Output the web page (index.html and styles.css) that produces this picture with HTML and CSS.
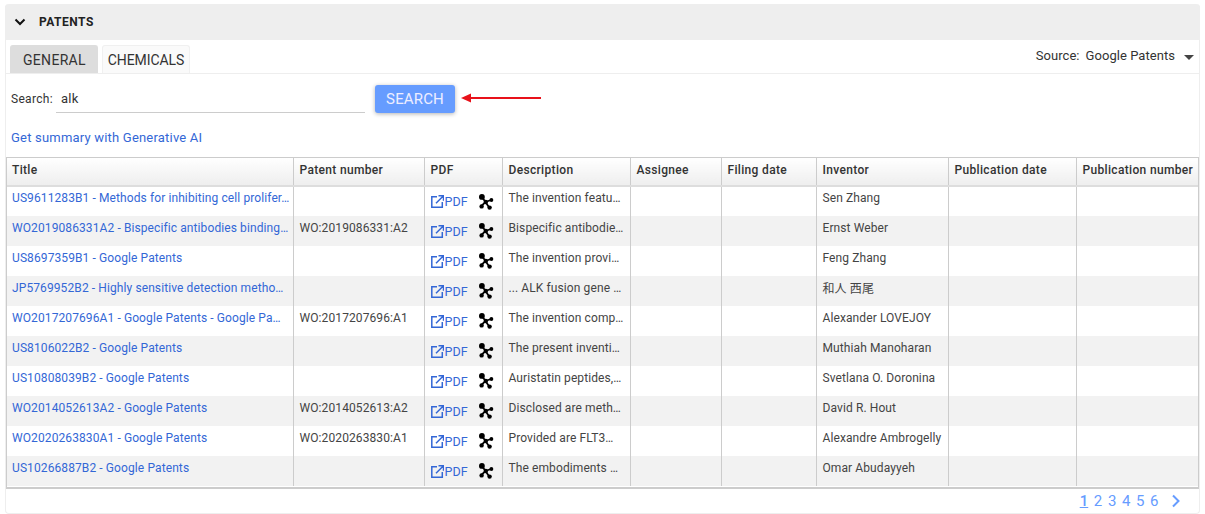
FILE: index.html
```html
<!DOCTYPE html>
<html lang="en">
<head>
  <meta charset="UTF-8" />
  <title>Patents</title>
  <link rel="stylesheet" href="styles.css">
</head>
<body>
  <svg class="defs" width="0" height="0">
    <symbol id="open" viewBox="0 0 13 13">
      <path d="M6 1.7H0.8v10.5h10.5V7M7.5 0.8h5v5M12.5 0.8L5 8.2" fill="none" stroke="currentColor" stroke-width="1.5"/>
    </symbol>
    <symbol id="mol" viewBox="0 0 15 16">
      <path d="M2.5 2.5L6.5 8L2.5 12M6.5 8L12 6M6.5 8L10.5 14" fill="none" stroke="#000" stroke-width="1.8"/>
      <circle cx="2.9" cy="2.9" r="2.9"/>
      <circle cx="2.6" cy="12.4" r="2.2"/>
      <circle cx="12.4" cy="6" r="1.9"/>
      <circle cx="10.6" cy="13.6" r="2.2"/>
      <circle cx="6.8" cy="8" r="2.2"/>
    </symbol>
  </svg>

  <div class="panel">
    <div class="panel-head">
      <svg class="chevron" width="12" height="8" viewBox="0 0 12 8"><path d="M1.5 1.5L6 6L10.5 1.5" fill="none" stroke="#111" stroke-width="2"/></svg>
      <span class="panel-title">PATENTS</span>
    </div>

    <div class="tabs">
      <div class="tab tab-active">GENERAL</div>
      <div class="tab">CHEMICALS</div>
      <div class="source">
        <span>Source:</span>
        <span>Google Patents</span>
        <span class="caret"></span>
      </div>
    </div>

    <div class="search-row">
      <label class="search-label" for="q">Search:</label>
      <input class="search-input" id="q" type="text" value="alk">
      <button class="search-btn">SEARCH</button>
      <svg class="arrow" width="80" height="12" viewBox="0 0 80 12"><path d="M8 6H80" stroke="#e8111a" stroke-width="2"/><path d="M0 6L10 1.5V10.5Z" fill="#e8111a"/></svg>
    </div>

    <a class="ai-link" href="#">Get summary with Generative AI</a>

    <div class="table-wrap">
      <table class="grid">
        <colgroup>
          <col class="c-title"><col class="c-num"><col class="c-pdf"><col class="c-desc"><col class="c-asg"><col class="c-file"><col class="c-inv"><col class="c-pub"><col class="c-pubn">
        </colgroup>
        <thead>
          <tr>
            <th>Title</th><th>Patent number</th><th>PDF</th><th>Description</th><th>Assignee</th><th>Filing date</th><th>Inventor</th><th>Publication date</th><th>Publication number</th>
          </tr>
        </thead>
        <tbody id="rows">
          <tr><td><a href="#">US9611283B1 - Methods for inhibiting cell prolifer…</a></td><td></td><td class="pdf"><a href="#"><svg class="i-open"><use href="#open"/></svg>PDF</a><svg class="i-mol"><use href="#mol"/></svg></td><td>The invention featu…</td><td></td><td></td><td>Sen Zhang</td><td></td><td></td></tr>
          <tr><td><a href="#">WO2019086331A2 - Bispecific antibodies binding…</a></td><td>WO:2019086331:A2</td><td class="pdf"><a href="#"><svg class="i-open"><use href="#open"/></svg>PDF</a><svg class="i-mol"><use href="#mol"/></svg></td><td>Bispecific antibodie…</td><td></td><td></td><td>Ernst Weber</td><td></td><td></td></tr>
          <tr><td><a href="#">US8697359B1 - Google Patents</a></td><td></td><td class="pdf"><a href="#"><svg class="i-open"><use href="#open"/></svg>PDF</a><svg class="i-mol"><use href="#mol"/></svg></td><td>The invention provi…</td><td></td><td></td><td>Feng Zhang</td><td></td><td></td></tr>
          <tr><td><a href="#">JP5769952B2 - Highly sensitive detection metho…</a></td><td></td><td class="pdf"><a href="#"><svg class="i-open"><use href="#open"/></svg>PDF</a><svg class="i-mol"><use href="#mol"/></svg></td><td>... ALK fusion gene …</td><td></td><td></td><td>和人 西尾</td><td></td><td></td></tr>
          <tr><td><a href="#">WO2017207696A1 - Google Patents - Google Pa…</a></td><td>WO:2017207696:A1</td><td class="pdf"><a href="#"><svg class="i-open"><use href="#open"/></svg>PDF</a><svg class="i-mol"><use href="#mol"/></svg></td><td>The invention comp…</td><td></td><td></td><td>Alexander LOVEJOY</td><td></td><td></td></tr>
          <tr><td><a href="#">US8106022B2 - Google Patents</a></td><td></td><td class="pdf"><a href="#"><svg class="i-open"><use href="#open"/></svg>PDF</a><svg class="i-mol"><use href="#mol"/></svg></td><td>The present inventi…</td><td></td><td></td><td>Muthiah Manoharan</td><td></td><td></td></tr>
          <tr><td><a href="#">US10808039B2 - Google Patents</a></td><td></td><td class="pdf"><a href="#"><svg class="i-open"><use href="#open"/></svg>PDF</a><svg class="i-mol"><use href="#mol"/></svg></td><td>Auristatin peptides,…</td><td></td><td></td><td>Svetlana O. Doronina</td><td></td><td></td></tr>
          <tr><td><a href="#">WO2014052613A2 - Google Patents</a></td><td>WO:2014052613:A2</td><td class="pdf"><a href="#"><svg class="i-open"><use href="#open"/></svg>PDF</a><svg class="i-mol"><use href="#mol"/></svg></td><td>Disclosed are meth…</td><td></td><td></td><td>David R. Hout</td><td></td><td></td></tr>
          <tr><td><a href="#">WO2020263830A1 - Google Patents</a></td><td>WO:2020263830:A1</td><td class="pdf"><a href="#"><svg class="i-open"><use href="#open"/></svg>PDF</a><svg class="i-mol"><use href="#mol"/></svg></td><td>Provided are FLT3…</td><td></td><td></td><td>Alexandre Ambrogelly</td><td></td><td></td></tr>
          <tr><td><a href="#">US10266887B2 - Google Patents</a></td><td></td><td class="pdf"><a href="#"><svg class="i-open"><use href="#open"/></svg>PDF</a><svg class="i-mol"><use href="#mol"/></svg></td><td>The embodiments …</td><td></td><td></td><td>Omar Abudayyeh</td><td></td><td></td></tr>
        </tbody>
      </table>
    </div>

    <div class="pager">
      <a class="page page-on" href="#">1</a>
      <a class="page" href="#">2</a>
      <a class="page" href="#">3</a>
      <a class="page" href="#">4</a>
      <a class="page" href="#">5</a>
      <a class="page" href="#">6</a>
      <svg class="next" width="10" height="14" viewBox="0 0 10 14"><path d="M2 1.5L7.5 7L2 12.5" fill="none" stroke="#669cff" stroke-width="2"/></svg>
    </div>
  </div>
</body>
</html>
```

FILE: styles.css
```css
body {
  font-family: Roboto, "Noto Sans CJK JP", sans-serif;
  background: #fff;
  margin: 0;
  padding: 4px 5px 0;
  color: #333;
}
a {
  color: #3367d6;
  text-decoration: none;
}
.defs {
  position: absolute;
}
.panel {
  width: 1195px;
  height: 510px;
  box-sizing: border-box;
  border: 1px solid #eee;
  border-top: none;
  border-radius: 4px;
}
.panel-head {
  height: 36px;
  margin: 0 -1px;
  background: #eee;
  border-radius: 4px 4px 0 0;
  display: flex;
  align-items: center;
  padding-left: 9px;
}
.chevron {
  margin-right: 13px;
}
.panel-title {
  font-size: 12px;
  font-weight: 700;
  letter-spacing: 0.5px;
  color: #222;
}
.tabs {
  height: 34px;
  box-sizing: border-box;
  padding: 5px 0 0 4px;
  border-bottom: 1px solid #eee;
  display: flex;
  gap: 4px;
}
.tab {
  height: 28px;
  box-sizing: border-box;
  padding: 0 5px;
  border: 1px solid #f0f0f0;
  border-bottom: none;
  border-radius: 3px 3px 0 0;
  background: #fafafa;
  font-size: 14px;
  letter-spacing: -0.1px;
  line-height: 28px;
}
.tab-active {
  background: #ddd;
  border-color: #ddd;
  padding: 0 11px 0 12px;
  letter-spacing: 0.3px;
}
.source {
  margin-left: auto;
  margin-right: 5px;
  display: flex;
  gap: 6px;
  font-size: 13px;
  letter-spacing: 0.05px;
  line-height: 22px;
}
.caret {
  margin: 10px 0 0 3px;
  border: 5px solid transparent;
  border-top: 5px solid #444;
  border-bottom: none;
}
.search-row {
  display: flex;
  align-items: center;
  height: 40px;
  padding: 5px 0 0 5px;
}
.search-label {
  font-size: 12px;
  letter-spacing: 0.3px;
  width: 45px;
}
.search-input {
  width: 309px;
  height: 28px;
  box-sizing: border-box;
  border: none;
  border-bottom: 1px solid #ccc;
  outline: none;
  padding: 0 5px 1px;
  font: 13px Roboto, sans-serif;
  letter-spacing: 0.3px;
  color: #333;
  margin-right: 10px;
}
.search-btn {
  width: 80px;
  height: 28px;
  border: none;
  border-radius: 3px;
  background: #669cff;
  color: #eef;
  font: 15px Roboto, sans-serif;
  letter-spacing: 0.15px;
  box-shadow: 0 1px 4px rgba(0,0,0,0.3);
}
.arrow {
  margin: 0 0 2px 6px;
}
.ai-link {
  display: block;
  margin: 11px 0 11px 5px;
  font-size: 13px;
  letter-spacing: 0.2px;
  line-height: 16px;
}
.table-wrap {
  border: 1px solid #ccc;
  border-width: 1px 1px 2px;
  padding-bottom: 1px;
  margin: 0;
  width: 1193px;
  box-sizing: border-box;
}
.grid {
  width: 100%;
  table-layout: fixed;
  border-collapse: collapse;
  font-size: 12px;
}
.c-title { width: 286px; }
.c-num { width: 131px; }
.c-pdf { width: 78px; }
.c-desc { width: 128px; }
.c-asg { width: 91px; }
.c-file { width: 95px; }
.c-inv { width: 132px; }
.c-pub { width: 128px; }
.grid th {
  height: 28px;
  box-sizing: border-box;
  padding: 0 4px 3px 6px;
  text-align: left;
  font-weight: 500;
  letter-spacing: 0.33px;
  color: #333;
  background: linear-gradient(#fff, #eee);
  border-right: 1px solid #ccc;
  border-bottom: 2px solid #ddd;
  white-space: nowrap;
  overflow: hidden;
}
.grid td {
  height: 30px;
  box-sizing: border-box;
  padding: 0 4px 7px 6px;
  border-right: 1px solid #ccc;
  white-space: nowrap;
  overflow: hidden;
  letter-spacing: 0.1px;
  color: #444;
}
.grid th:first-child,
.grid td:first-child {
  padding-left: 5px;
}
.grid td a {
  letter-spacing: 0.1px;
}
.grid th:last-child,
.grid td:last-child {
  border-right: none;
}
.grid tbody tr:nth-child(even) {
  background: #f2f2f2;
}
.grid td.pdf {
  padding: 0 0 0 6px;
}
.pdf a {
  display: inline-flex;
  align-items: center;
  vertical-align: middle;
  font-size: 12.5px;
}
.i-open {
  width: 13px;
  height: 13px;
  margin-right: 1px;
}
.i-mol {
  width: 15px;
  height: 16px;
  margin-left: 11px;
  vertical-align: middle;
}
.pager {
  display: flex;
  justify-content: flex-end;
  align-items: center;
  gap: 5.6px;
  height: 23px;
  padding-right: 18px;
}
.page {
  color: #669cff;
  font-size: 15px;
}
.page-on {
  font-weight: 500;
  text-decoration: underline;
}
.next {
  margin-left: 7px;
}
```
